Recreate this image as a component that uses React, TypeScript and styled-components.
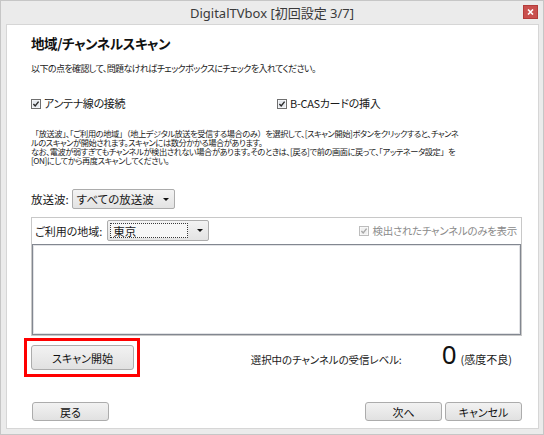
import React from 'react';
import styled, { createGlobalStyle, css } from 'styled-components';

const GlobalStyle = createGlobalStyle`
  html, body {
    margin: 0;
    padding: 0;
  }
  body {
    background: #ebebeb;
    font-family: "Noto Sans CJK JP", "Noto Sans", sans-serif;
    font-feature-settings: "palt" 1;
    color: #1a1a1a;
  }
`;

const Window = styled.div`
  box-sizing: border-box;
  width: 544px;
  height: 435px;
  display: flex;
  flex-direction: column;
  background: #ebebeb;
  border: 1px solid #c6c6c6;
`;

const TitleBar = styled.div`
  height: 23px;
  display: grid;
  grid-template-columns: 1fr auto 1fr;
  align-items: center;
`;

const TitleText = styled.div`
  grid-column: 2;
  font-family: "Noto Sans", "Noto Sans CJK JP", sans-serif;
  font-feature-settings: normal;
  font-size: 13px;
  color: #3a3a3a;
  white-space: nowrap;
`;

const CloseButton = styled.div`
  grid-column: 3;
  justify-self: end;
  align-self: start;
  margin: 4px 5px 0 0;
  width: 15px;
  height: 14px;
  display: flex;
  align-items: center;
  justify-content: center;
  background: #c9504e;
  border: 1px solid #b33c3a;
  box-sizing: border-box;
`;

const Panel = styled.div`
  flex: 1;
  margin: 0 4px 5px 5px;
  padding: 9px 16px 7px 24px;
  display: flex;
  flex-direction: column;
  background: #fff;
  border: 1px solid #d6d6d6;
`;

const Heading = styled.h1`
  margin: 0;
  font-size: 13.5px;
  letter-spacing: -0.4px;
  line-height: 18px;
  font-weight: 700;
  color: #111;
  white-space: nowrap;
`;

const Lead = styled.p`
  margin: 11px 0 0;
  font-size: 9px;
  letter-spacing: -0.6px;
  line-height: 12px;
  white-space: nowrap;
`;

const CheckRow = styled.div`
  margin-top: 22px;
  height: 13px;
  display: grid;
  grid-template-columns: 246px auto;
  align-items: center;
`;

const CheckItem = styled.label<{ $disabled?: boolean }>`
  display: flex;
  align-items: center;
  gap: 3px;
  font-size: ${(p) => (p.$disabled ? '10.5px' : '11px')};
  letter-spacing: -0.3px;
  line-height: 13px;
  white-space: nowrap;
  color: ${(p) => (p.$disabled ? '#8a8a8a' : '#1a1a1a')};
`;

const Note = styled.div`
  margin-top: 19px;
  font-size: 8.2px;
  letter-spacing: -0.4px;
  line-height: 9px;
`;

const NoteLine = styled.span`
  display: block;
  white-space: nowrap;
`;

/* full-width brackets keep their em box, as in the original dialog font */
const Bracket = styled.span`
  font-feature-settings: normal;
`;

const FieldRow = styled.div`
  margin-top: 24px;
  display: flex;
  align-items: center;
  gap: 3px;
`;

const FieldLabel = styled.span<{ $size?: number }>`
  font-size: ${(p) => p.$size ?? 11.5}px;
  white-space: nowrap;
`;

const Select = styled.div<{ $width: number; $height: number }>`
  box-sizing: border-box;
  width: ${(p) => p.$width}px;
  height: ${(p) => p.$height}px;
  display: flex;
  align-items: center;
  padding: 0 5px 0 2px;
  border: 1px solid #acacac;
  border-radius: 2px;
  background: linear-gradient(#f3f3f3, #e3e3e3);
`;

const SelectValue = styled.span<{ $focused?: boolean }>`
  flex: 1;
  align-self: stretch;
  display: flex;
  align-items: center;
  padding-left: 2px;
  font-size: 11.5px;
  white-space: nowrap;
  ${(p) =>
    p.$focused &&
    css`
      margin: 2px 9px 2px 0;
      border: 1px dotted #3a3a3a;
      background: #f7f7f7;
    `}
`;

const SelectArrow = styled.span`
  width: 0;
  height: 0;
  border-left: 3px solid transparent;
  border-right: 3px solid transparent;
  border-top: 3px solid #111;
`;

const GroupBox = styled.div`
  margin-top: 8px;
  display: flex;
  flex-direction: column;
  border: 1px solid #c8c8c8;
`;

const GroupHeader = styled.div`
  height: 21px;
  margin-top: 2px;
  padding: 0 4px 0 3px;
  display: flex;
  align-items: center;
  gap: 5px;
`;

const Spacer = styled.div`
  flex: 1;
`;

const ChannelList = styled.div`
  height: 91px;
  box-sizing: border-box;
  margin: 3px 0 0;
  background: #fff;
  border: 1px solid #828790;
  box-shadow: inset 0 0 0 1px #e2e3e6;
`;

const ScanRow = styled.div`
  margin-top: 2px;
  display: flex;
  align-items: center;
  justify-content: space-between;
`;

const Highlight = styled.div`
  margin-left: -7px;
  padding: 4px 3px 4px 4px;
  border: 3px solid #ff0000;
`;

const Button = styled.button<{ $width: number; $height: number }>`
  box-sizing: border-box;
  width: ${(p) => p.$width}px;
  height: ${(p) => p.$height}px;
  padding: 0;
  display: flex;
  align-items: center;
  justify-content: center;
  font-family: "Noto Sans CJK JP", "Noto Sans", sans-serif;
  font-feature-settings: "palt" 1;
  font-size: 11px;
  color: #111;
  background: linear-gradient(#f2f2f2, #e1e1e1);
  border: 1px solid #acacac;
  border-radius: 3px;
`;

const Level = styled.div`
  margin: 0 10px 7px 0;
  display: flex;
  align-items: baseline;
  white-space: nowrap;
`;

const LevelLabel = styled.span`
  font-size: 10.5px;
  letter-spacing: -0.1px;
  margin-right: 40px;
`;

const LevelValue = styled.span`
  font-family: "Noto Sans", sans-serif;
  font-size: 26px;
  line-height: 26px;
  color: #111;
  margin-right: 4px;
`;

const LevelNote = styled.span`
  font-size: 11px;
`;

const Footer = styled.div`
  margin-top: auto;
  display: flex;
  align-items: center;
  gap: 3px;
  padding-left: 1px;
`;

const CheckBox = ({ disabled }: { disabled?: boolean }) => (
  <svg width="10" height="10" viewBox="0 0 10 10">
    <rect x="0.5" y="0.5" width="9" height="9" fill="#fff" stroke={disabled ? '#bdbdbd' : '#6f6f6f'} />
    <rect x="1.5" y="1.5" width="7" height="7" fill={disabled ? '#f0f0f0' : '#e4e8ee'} />
    <path
      d="M2.4 5 L4.2 7 L7.6 2.6"
      fill="none"
      stroke={disabled ? '#a8a8a8' : '#2a2a2a'}
      strokeWidth="1.4"
    />
  </svg>
);

export default function App() {
  return (
    <>
      <GlobalStyle />
      <Window>
        <TitleBar>
          <TitleText>DigitalTVbox [初回設定 3/7]</TitleText>
          <CloseButton>
            <svg width="7" height="6" viewBox="0 0 7 6">
              <path d="M1 0.5 L6 5.5 M6 0.5 L1 5.5" stroke="#fff" strokeWidth="1.6" />
            </svg>
          </CloseButton>
        </TitleBar>
        <Panel>
          <Heading>地域/チャンネルスキャン</Heading>
          <Lead>以下の点を確認して、問題なければチェックボックスにチェックを入れてください。</Lead>
          <CheckRow>
            <CheckItem>
              <CheckBox />
              アンテナ線の接続
            </CheckItem>
            <CheckItem>
              <CheckBox />
              B-CASカードの挿入
            </CheckItem>
          </CheckRow>
          <Note>
            <NoteLine>
              <Bracket>「</Bracket>放送波<Bracket>」</Bracket>、<Bracket>「</Bracket>ご利用の地域
              <Bracket>」（</Bracket>地上デジタル放送を受信する場合のみ<Bracket>）</Bracket>
              を選択して、[スキャン開始]ボタンをクリックすると、チャンネ
            </NoteLine>
            <NoteLine>ルのスキャンが開始されます。スキャンには数分かかる場合があります。</NoteLine>
            <NoteLine>
              なお、電波が弱すぎてもチャンネルが検出されない場合があります。そのときは、[戻る]で前の画面に戻って、
              <Bracket>「</Bracket>アッテネータ設定<Bracket>」</Bracket>を
            </NoteLine>
            <NoteLine>[ON]にしてから再度スキャンしてください。</NoteLine>
          </Note>
          <FieldRow>
            <FieldLabel>放送波:</FieldLabel>
            <Select $width={103} $height={20}>
              <SelectValue>すべての放送波</SelectValue>
              <SelectArrow />
            </Select>
          </FieldRow>
          <GroupBox>
            <GroupHeader>
              <FieldLabel $size={11}>ご利用の地域:</FieldLabel>
              <Select $width={102} $height={21}>
                <SelectValue $focused>東京</SelectValue>
                <SelectArrow />
              </Select>
              <Spacer />
              <CheckItem $disabled>
                <CheckBox disabled />
                検出されたチャンネルのみを表示
              </CheckItem>
            </GroupHeader>
            <ChannelList />
          </GroupBox>
          <ScanRow>
            <Highlight>
              <Button $width={103} $height={25}>スキャン開始</Button>
            </Highlight>
            <Level>
              <LevelLabel>選択中のチャンネルの受信レベル:</LevelLabel>
              <LevelValue>0</LevelValue>
              <LevelNote>(感度不良)</LevelNote>
            </Level>
          </ScanRow>
          <Footer>
            <Button $width={77} $height={19}>戻る</Button>
            <Spacer />
            <Button $width={77} $height={19}>次へ</Button>
            <Button $width={77} $height={19}>キャンセル</Button>
          </Footer>
        </Panel>
      </Window>
    </>
  );
}
